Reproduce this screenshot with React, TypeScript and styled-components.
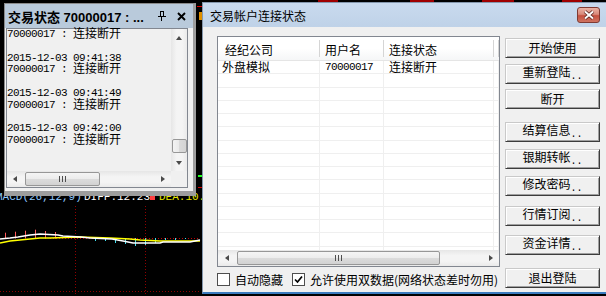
import React from "react";
import styled, { createGlobalStyle } from "styled-components";

const Global = createGlobalStyle`
  html, body { margin: 0; padding: 0; background: #000; }
  body {
    width: 606px; height: 296px; overflow: hidden;
    font-family: "Noto Sans CJK SC", "Liberation Sans", sans-serif;
    font-size: 12px; color: #000;
  }
  * { box-sizing: border-box; }
`;

const Desktop = styled.div`
  position: relative;
  width: 606px;
  height: 296px;
  overflow: hidden;
  background: #000;
`;

const ChartLayer = styled.svg`
  position: absolute;
  left: 0;
  top: 0;
  width: 606px;
  height: 296px;
`;

/* ---------- shared text bits ---------- */
const Mono = styled.span`
  font-family: "Liberation Mono", "DejaVu Sans Mono", monospace;
  font-size: 11px;
  letter-spacing: -0.6px;
`;
const Dots = styled.span`
  font-family: "Liberation Mono", "DejaVu Sans Mono", monospace;
  font-size: 10px;
  vertical-align: -2px;
`;
const Han = styled.span`
  font-family: "Noto Sans CJK SC", sans-serif;
  font-size: 12px;
  letter-spacing: 0;
  line-height: 0;
  vertical-align: -1px;
`;

/* ---------- scroll bars ---------- */
type Axis = "x" | "y";
const ScrollTrack = styled.div<{ $axis: Axis }>`
  display: flex;
  flex-direction: ${(p) => (p.$axis === "y" ? "column" : "row")};
  align-items: ${(p) => (p.$axis === "y" ? "center" : "stretch")};
  background: ${(p) =>
    p.$axis === "y"
      ? "linear-gradient(to right, #e6e6e6, #f4f4f4 35%, #f4f4f4 70%, #eaeaea)"
      : "linear-gradient(#e6e6e6, #f4f4f4 35%, #f4f4f4 70%, #eaeaea)"};
`;
const ScrollButton = styled.div<{ $axis: Axis; $len: number }>`
  flex: none;
  display: flex;
  align-items: center;
  justify-content: center;
  ${(p) => (p.$axis === "y" ? `height:${p.$len}px; width:100%;` : `width:${p.$len}px;`)}
`;
const Spacer = styled.div`
  flex: 1;
`;
const Arrow = styled.span<{ $dir: "up" | "down" | "left" | "right" }>`
  width: 0;
  height: 0;
  ${(p) =>
    p.$dir === "up"
      ? "border-left:3.5px solid transparent;border-right:3.5px solid transparent;border-bottom:4px solid #4a4a4a;"
      : p.$dir === "down"
      ? "border-left:3.5px solid transparent;border-right:3.5px solid transparent;border-top:4px solid #4a4a4a;"
      : p.$dir === "left"
      ? "border-top:3.5px solid transparent;border-bottom:3.5px solid transparent;border-right:4px solid #4a4a4a;"
      : "border-top:3.5px solid transparent;border-bottom:3.5px solid transparent;border-left:4px solid #4a4a4a;"}
`;
const Thumb = styled.div<{ $axis: Axis; $start: number; $size: number }>`
  flex: none;
  display: flex;
  align-items: center;
  justify-content: center;
  border: 1px solid #979797;
  border-radius: 2px;
  ${(p) =>
    p.$axis === "y"
      ? `margin-top:${p.$start}px; height:${p.$size}px; width:15px;
         background: linear-gradient(to right, #f3f3f3, #e9e9e9 50%, #dadada 50%, #d4d4d4);`
      : `margin-left:${p.$start}px; width:${p.$size}px; margin-top:1px; margin-bottom:1px;
         background: linear-gradient(#f5f5f5, #ececec 50%, #dcdcdc 50%, #d2d2d2);`}
`;
const Grip = styled.span`
  width: 7px;
  height: 6px;
  background: repeating-linear-gradient(to right, #4e4e4e 0 1px, transparent 1px 3px);
`;

/* ---------- dock panel (left) ---------- */
const DockPanel = styled.section`
  position: absolute;
  left: 4px;
  top: 3px;
  width: 192px;
  height: 193px;
  display: flex;
  flex-direction: column;
  background: #f0f0f0;
  border-left: 1px solid #8a8a8a;
  border-top: 1px solid #8a8a8a;
  border-right: 3px solid #9d9d9d;
  border-bottom: 5px solid #9d9d9d;
`;
const DockTitle = styled.header`
  flex: none;
  height: 24px;
  display: flex;
  align-items: center;
  padding: 0 7px 0 3px;
  background: #b9cadb;
  font: bold 13px "Liberation Sans", "Noto Sans CJK SC", sans-serif;
`;
const DockTitleText = styled.span`
  flex: 1;
  white-space: nowrap;
  overflow: hidden;
`;
const TitleIcon = styled.svg<{ $gap: number }>`
  flex: none;
  margin-left: ${(p) => p.$gap}px;
`;
const DockBody = styled.div`
  flex: 1;
  display: flex;
  padding: 0 5px 3px 1px;
  min-height: 0;
`;
const LogBox = styled.div`
  flex: 1;
  display: grid;
  grid-template-columns: 1fr 16px;
  grid-template-rows: 1fr 16px;
  border: 1px solid #828790;
  background: #f0f0f0;
  min-height: 0;
`;
const LogText = styled.div`
  min-height: 0;
`;
const LogLine = styled.div`
  height: 11.8px;
  line-height: 11.8px;
  white-space: pre;
  font-family: "Liberation Mono", "DejaVu Sans Mono", monospace;
  font-size: 11px;
  letter-spacing: -0.6px;
`;
const Corner = styled.div`
  background: #f0f0f0;
`;

/* ---------- dialog (right) ---------- */
const Dialog = styled.section`
  position: absolute;
  left: 202px;
  top: 2px;
  width: 406px;
  height: 292px;
  display: flex;
  flex-direction: column;
  background: #f0f0f0;
  border: 1px solid #8497ad;
  border-bottom: 2px solid #3b7bbf;
`;
const DialogTitle = styled.header`
  flex: none;
  height: 24px;
  display: flex;
  align-items: center;
  padding: 0 7px;
  background: linear-gradient(#c9daee, #bfd2e8);
  font-size: 12px;
`;
const DialogTitleText = styled.span`
  flex: 1;
`;
const CloseButton = styled.div`
  width: 23px;
  height: 16px;
  border: 1px solid #7f3a32;
  border-radius: 3px;
  display: flex;
  align-items: center;
  justify-content: center;
  background: linear-gradient(#eab3a5, #d98a7b 45%, #c5503f 55%, #cf7360);
`;
const DialogBody = styled.div`
  flex: 1;
  display: flex;
  align-items: flex-start;
  gap: 5px;
  padding: 9px 0 0 14px;
`;
const LeftCol = styled.div`
  width: 283px;
  display: flex;
  flex-direction: column;
`;
const ListView = styled.div`
  height: 231px;
  display: flex;
  flex-direction: column;
  border: 1px solid #828790;
  background: #fff;
`;
const ListHeader = styled.div`
  flex: none;
  height: 24px;
  display: flex;
  border-bottom: 1px solid #e5e5e5;
  background: linear-gradient(#ffffff, #ffffff 50%, #f5f6f7);
`;
const HeadCell = styled.div<{ $w?: number; $pad: number }>`
  ${(p) => (p.$w ? `width:${p.$w}px; flex:none;` : "flex:1;")}
  padding: 1px 0 0 ${(p) => p.$pad}px;
  display: flex;
  align-items: center;
  white-space: nowrap;
  background: linear-gradient(#d5d5d5, #d5d5d5) right 3px / 1px calc(100% - 6px) no-repeat;
`;
const ListRows = styled.div`
  flex: 1;
  overflow: hidden;
`;
const Row = styled.div`
  height: 13.25px;
  display: flex;
  border-bottom: 1px solid #efefef;
`;
const Cell = styled.div<{ $w?: number; $pad: number }>`
  ${(p) => (p.$w ? `width:${p.$w}px; flex:none;` : "flex:1;")}
  padding-left: ${(p) => p.$pad}px;
  border-right: 1px solid #efefef;
  display: flex;
  align-items: center;
  white-space: nowrap;
  line-height: 12px;
  font-size: 12px;
`;
const ListScroll = styled(ScrollTrack)`
  flex: none;
  height: 16px;
`;
const CheckRow = styled.div`
  margin-top: 6px;
  height: 13px;
  display: flex;
  align-items: center;
`;
const CheckItem = styled.label<{ $gap: number }>`
  display: flex;
  align-items: center;
  gap: 5px;
  margin-left: ${(p) => p.$gap}px;
  white-space: nowrap;
  line-height: 13px;
`;
const CheckBox = styled.span`
  width: 13px;
  height: 13px;
  flex: none;
  border: 1px solid #4e4e4e;
  background: #fff;
  display: flex;
  align-items: center;
  justify-content: center;
`;
const RightCol = styled.div`
  width: 95px;
  display: flex;
  flex-direction: column;
`;
const DlgButton = styled.div<{ $gap: number }>`
  margin-top: ${(p) => p.$gap}px;
  height: 20px;
  display: flex;
  align-items: center;
  justify-content: center;
  background: #f0f0f0;
  border: 1px solid;
  border-color: #c9c9c9 #3c3c3c #3c3c3c #c9c9c9;
  box-shadow: inset 1px 1px 0 #ffffff, inset -1px -1px 0 #a0a0a0;
  font-size: 12px;
`;
const ButtonLabel = styled.span`
  white-space: nowrap;
  line-height: 16px;
`;

/* ---------- data ---------- */
const STATUS = "status";
const logLines = [STATUS, "", "2015-12-03 09:41:38", STATUS, "", "2015-12-03 09:41:49", STATUS, "", "2015-12-03 09:42:00", STATUS];

const buttons: { label: string; dots?: boolean; gap: number }[] = [
  { label: "开始使用", gap: 2 },
  { label: "重新登陆", dots: true, gap: 6 },
  { label: "断开", gap: 5 },
  { label: "结算信息", dots: true, gap: 13 },
  { label: "银期转帐", dots: true, gap: 7 },
  { label: "修改密码", dots: true, gap: 7 },
  { label: "行情订阅", dots: true, gap: 10 },
  { label: "资金详情", dots: true, gap: 9 },
  { label: "退出登陆", gap: 13 },
];

const cols = [102, 64, 110];

function Chart() {
  const white = "0,239 10,238 18,237 30,235 40,234 58,235 63,236 81,237 90,238 112,239 123,241 133,243 160,243 163,242 190,242 200,240";
  const yellow = "0,243 10,241 20,240 30,239 40,238 50,238 80,237 110,238 130,239 140,240 160,241 200,241";
  const red = [
    [5, 232.7],
    [15, 231.7],
    [25, 230.7],
    [35, 229.7],
    [45, 231],
    [55, 232],
  ];
  const cyan = [
    [95, 241],
    [105, 241],
    [115, 243],
    [125, 244],
    [135, 246],
    [145, 245],
    [155, 243],
    [165, 240],
    [175, 240],
    [185, 239],
  ];
  return (
    <ChartLayer viewBox="0 0 606 296">
      {/* fragments above the dialog */}
      <rect x="318" y="0" width="20" height="2" fill="#a00000" />
      <rect x="410" y="0" width="24" height="2" fill="#a00000" />
      <rect x="482" y="0" width="32" height="2" fill="#a00000" />
      <rect x="562" y="0" width="20" height="2" fill="#a00000" />
      {/* fragments between panel and dialog */}
      <rect x="197" y="6" width="6" height="1" fill="#e00000" />
      <rect x="199" y="12" width="3" height="8" fill="#e09000" />
      <rect x="198" y="175" width="5" height="2" fill="#20ff20" />
      <rect x="198" y="187" width="5" height="1" fill="#d00000" />
      {/* indicator header (mostly hidden by the panel) */}
      <text x="-4" y="200" fill="#8fc8ff" fontFamily="Liberation Mono, monospace" fontSize="11">MACD(26,12,9)</text>
      <text x="84" y="200" fill="#ffffff" fontFamily="Liberation Mono, monospace" fontSize="11">DIFF:12.23</text>
      <rect x="150" y="196" width="5" height="4" fill="#ff4040" />
      <text x="159" y="200" fill="#e8e800" fontFamily="Liberation Mono, monospace" fontSize="11">DEA:10.</text>
      {/* grid */}
      <line x1="75.5" y1="206" x2="75.5" y2="296" stroke="#900000" strokeDasharray="1 2" />
      <line x1="145.5" y1="206" x2="145.5" y2="296" stroke="#900000" strokeDasharray="1 2" />
      <line x1="50" y1="238.5" x2="200" y2="238.5" stroke="#c00000" strokeDasharray="1 2" />
      <line x1="0" y1="291.5" x2="200" y2="291.5" stroke="#900000" strokeDasharray="1 2" />
      {red.map(([x, y]) => (
        <line key={`r${x}`} x1={x + 0.5} y1={238.5} x2={x + 0.5} y2={y} stroke="#ff5a5a" />
      ))}
      {cyan.map(([x, y]) => (
        <line key={`c${x}`} x1={x + 0.5} y1={238} x2={x + 0.5} y2={y} stroke="#40e0f0" />
      ))}
      <polyline points={yellow} fill="none" stroke="#ffff00" strokeWidth="1.5" />
      <polyline points={white} fill="none" stroke="#ffffff" strokeWidth="1.5" />
    </ChartLayer>
  );
}

function HScroll({ thumbStart, thumbSize, btn }: { thumbStart: number; thumbSize: number; btn: number }) {
  return (
    <>
      <ScrollButton $axis="x" $len={btn}>
        <Arrow $dir="left" />
      </ScrollButton>
      <Thumb $axis="x" $start={thumbStart} $size={thumbSize}>
        <Grip />
      </Thumb>
      <Spacer />
      <ScrollButton $axis="x" $len={btn}>
        <Arrow $dir="right" />
      </ScrollButton>
    </>
  );
}

export default function App() {
  return (
    <>
      <Global />
      <Desktop>
        <Chart />

        <DockPanel>
          <DockTitle>
            <DockTitleText>交易状态 70000017 : ...</DockTitleText>
            <TitleIcon $gap={4} width="8" height="10" viewBox="0 0 8 10">
              <rect x="2.5" y="0.5" width="3" height="5" fill="none" stroke="#000" />
              <rect x="5" y="0" width="1" height="6" fill="#000" />
              <rect x="0" y="5" width="8" height="1" fill="#000" />
              <rect x="3" y="6" width="1" height="4" fill="#000" />
            </TitleIcon>
            <TitleIcon $gap={11} width="9" height="9" viewBox="0 0 9 9">
              <path d="M1 1L8 8M8 1L1 8" stroke="#000" strokeWidth="1.9" />
            </TitleIcon>
          </DockTitle>
          <DockBody>
            <LogBox>
              <LogText>
                {logLines.map((l, i) => (
                  <LogLine key={i}>
                    {l === STATUS ? (
                      <>
                        70000017 : <Han>连接断开</Han>
                      </>
                    ) : (
                      l || " "
                    )}
                  </LogLine>
                ))}
              </LogText>
              <ScrollTrack $axis="y">
                <ScrollButton $axis="y" $len={17}>
                  <Arrow $dir="up" />
                </ScrollButton>
                <Thumb $axis="y" $start={93} $size={14} />
                <Spacer />
                <ScrollButton $axis="y" $len={16}>
                  <Arrow $dir="down" />
                </ScrollButton>
              </ScrollTrack>
              <ScrollTrack $axis="x">
                <HScroll btn={16} thumbStart={2} thumbSize={75} />
              </ScrollTrack>
              <Corner />
            </LogBox>
          </DockBody>
        </DockPanel>

        <Dialog>
          <DialogTitle>
            <DialogTitleText>交易帐户连接状态</DialogTitleText>
            <CloseButton>
              <svg width="12" height="10" viewBox="0 0 12 10">
                <path d="M2 1.5L10 8.5M10 1.5L2 8.5" stroke="#5a2520" strokeWidth="3.6" />
                <path d="M2 1.5L10 8.5M10 1.5L2 8.5" stroke="#ffffff" strokeWidth="1.9" />
              </svg>
            </CloseButton>
          </DialogTitle>
          <DialogBody>
            <LeftCol>
              <ListView>
                <ListHeader>
                  <HeadCell $w={cols[0]} $pad={7}>经纪公司</HeadCell>
                  <HeadCell $w={cols[1]} $pad={5}>用户名</HeadCell>
                  <HeadCell $w={cols[2]} $pad={5}>连接状态</HeadCell>
                  <HeadCell $pad={0} />
                </ListHeader>
                <ListRows>
                  {Array.from({ length: 15 }).map((_, i) => (
                    <Row key={i}>
                      <Cell $w={cols[0]} $pad={4}>{i === 0 ? "外盘模拟" : ""}</Cell>
                      <Cell $w={cols[1]} $pad={5}>{i === 0 ? <Mono>70000017</Mono> : ""}</Cell>
                      <Cell $w={cols[2]} $pad={5}>{i === 0 ? "连接断开" : ""}</Cell>
                      <Cell $pad={0} />
                    </Row>
                  ))}
                </ListRows>
                <ListScroll $axis="x">
                  <HScroll btn={17} thumbStart={2} thumbSize={203} />
                </ListScroll>
              </ListView>
              <CheckRow>
                <CheckItem $gap={0}>
                  <CheckBox />
                  自动隐藏
                </CheckItem>
                <CheckItem $gap={9}>
                  <CheckBox>
                    <svg width="9" height="9" viewBox="0 0 9 9">
                      <path d="M1 4.5L3.5 7L8 1.5" fill="none" stroke="#000" strokeWidth="1.7" />
                    </svg>
                  </CheckBox>
                  允许使用双数据(网络状态差时勿用)
                </CheckItem>
              </CheckRow>
            </LeftCol>
            <RightCol>
              {buttons.map((b) => (
                <DlgButton key={b.label} $gap={b.gap}>
                  <ButtonLabel>
                    {b.label}
                    {b.dots ? <Dots>..</Dots> : null}
                  </ButtonLabel>
                </DlgButton>
              ))}
            </RightCol>
          </DialogBody>
        </Dialog>
      </Desktop>
    </>
  );
}
